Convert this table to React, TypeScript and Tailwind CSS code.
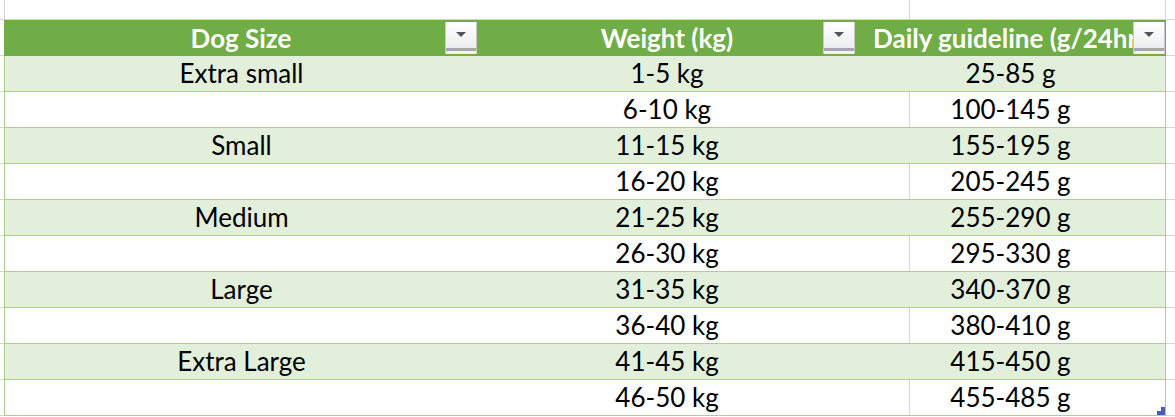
const rows = [
  { size: "Extra small", weight: "1-5 kg", daily: "25-85 g" },
  { size: "", weight: "6-10 kg", daily: "100-145 g" },
  { size: "Small", weight: "11-15 kg", daily: "155-195 g" },
  { size: "", weight: "16-20 kg", daily: "205-245 g" },
  { size: "Medium", weight: "21-25 kg", daily: "255-290 g" },
  { size: "", weight: "26-30 kg", daily: "295-330 g" },
  { size: "Large", weight: "31-35 kg", daily: "340-370 g" },
  { size: "", weight: "36-40 kg", daily: "380-410 g" },
  { size: "Extra Large", weight: "41-45 kg", daily: "415-450 g" },
  { size: "", weight: "46-50 kg", daily: "455-485 g" },
];

function FilterButton() {
  return (
    <div className="absolute right-[1px] top-[2px] flex h-[32px] w-[32px] flex-col border-x border-[#c9c9c9] bg-gradient-to-b from-[#ffffff] to-[#e8e9ed]">
      <div className="flex flex-1 items-start justify-center pt-[10px]">
        <svg width="10" height="6" viewBox="0 0 10 6">
          <polygon points="0,0 10,0 5,5" fill="#555555" />
        </svg>
      </div>
      <div className="h-[3px] bg-[#a8a8a8]" />
      <div className="h-[3px] bg-[#f3f3f3]" />
    </div>
  );
}

export default function App() {
  return (
    <div
      className="flex h-[417px] w-[1175px] flex-col overflow-hidden bg-white text-black"
      style={{ fontFamily: "Lato, 'Open Sans', sans-serif" }}
    >
      {/* top empty sheet row */}
      <div className="flex h-[20px] border-b border-[#d4d4d4]">
        <div className="w-[5px] border-r border-[#d4d4d4]" />
        <div className="w-[905px] border-r border-[#d4d4d4]" />
        <div className="w-[256px] border-r border-[#d4d4d4]" />
        <div className="flex-1" />
      </div>

      {/* header */}
      <div className="flex h-[36px]">
        <div className="w-[4px] border-b border-[#d4d4d4]" />
        <div className="flex w-[1162px] bg-[#70ad47] text-[26px] font-bold text-white">
          <div className="relative flex w-[474px] items-center justify-center">
            Dog Size
            <FilterButton />
          </div>
          <div className="relative flex w-[378px] items-center justify-center">
            Weight (kg)
            <FilterButton />
          </div>
          <div className="relative flex w-[310px] items-center overflow-hidden whitespace-nowrap pl-[17px]">
            Daily guideline (g/24hrs)
            <FilterButton />
          </div>
        </div>
        <div className="flex-1 border-b border-[#d4d4d4]" />
      </div>

      {rows.map((r, i) => {
        const band = i % 2 === 0;
        const last = i === rows.length - 1;
        return (
          <div key={i} className="flex h-[36px] shrink-0">
            <div className="w-[4px] border-b border-[#d4d4d4]" />
            <div
              className={`relative flex w-[1162px] border-x border-b border-[#a9d08e] text-[26px] ${
                band ? "bg-[#e2efda]" : "bg-white"
              }`}
            >
              <div className="flex w-[473px] items-center justify-center">{r.size}</div>
              <div className="flex w-[378px] items-center justify-center">{r.weight}</div>
              <div className="relative flex w-[309px] items-center justify-center">
                {!band && <div className="absolute bottom-0 left-[53px] top-0 w-px bg-[#d4d4d4]" />}
                <span className="relative">{r.daily}</span>
              </div>
              {last && (
                <div className="absolute bottom-0 right-0 flex flex-col items-end">
                  <div className="h-[4px] w-[4px] bg-[#4b5bb5]" />
                  <div className="h-[4px] w-[8px] bg-[#4b5bb5]" />
                </div>
              )}
            </div>
            <div className="flex-1 border-b border-[#d4d4d4]" />
          </div>
        );
      })}
    </div>
  );
}
